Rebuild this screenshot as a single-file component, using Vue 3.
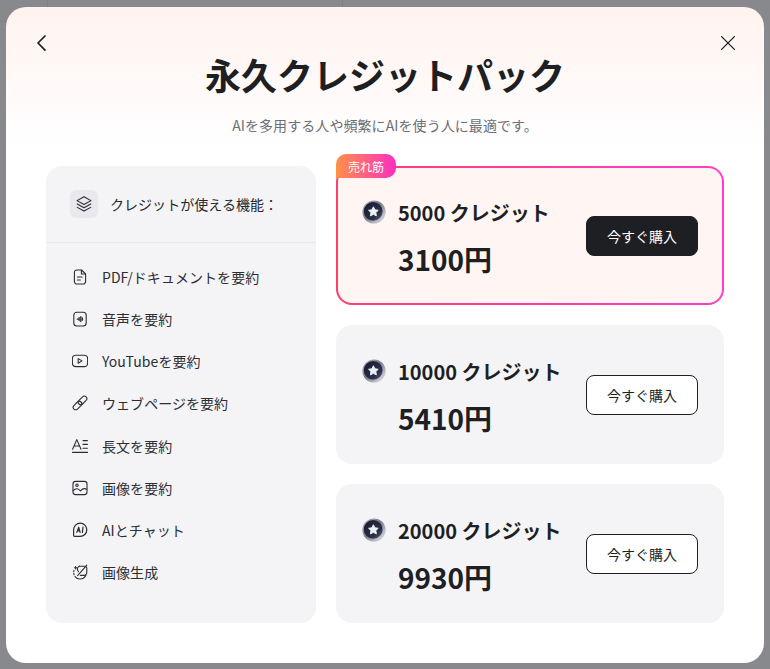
<script setup>
const features = [
  { label: 'PDF/ドキュメントを要約', icon: 'doc' },
  { label: '音声を要約', icon: 'audio' },
  { label: 'YouTubeを要約', icon: 'video' },
  { label: 'ウェブページを要約', icon: 'link' },
  { label: '長文を要約', icon: 'text' },
  { label: '画像を要約', icon: 'image' },
  { label: 'AIとチャット', icon: 'chat' },
  { label: '画像生成', icon: 'gen' },
]
const packs = [
  { credits: '5000 クレジット', price: '3100円', best: true },
  { credits: '10000 クレジット', price: '5410円', best: false },
  { credits: '20000 クレジット', price: '9930円', best: false },
]
</script>

<template>
  <div class="backdrop">
    <div class="modal">
      <div class="top-bar">
        <svg class="nav-icon" viewBox="0 0 20 20" fill="none" stroke="#1d1f23" stroke-width="1.7" stroke-linecap="round" stroke-linejoin="round"><path d="M13 3 6 10l7 7.2" /></svg>
        <svg class="nav-icon" viewBox="0 0 20 20" fill="none" stroke="#1d1f23" stroke-width="1.3" stroke-linecap="round"><path d="M3.6 3.6l12.8 12.8M16.4 3.6 3.6 16.4" /></svg>
      </div>
      <h1 class="title">永久クレジットパック</h1>
      <p class="subtitle">AIを多用する人や頻繁にAIを使う人に最適です。</p>
      <div class="content">
        <aside class="panel">
          <div class="panel-head">
            <span class="stack-box">
              <svg width="18" height="18" viewBox="0 0 16 16" fill="none" stroke="#2a2d32" stroke-width="1" stroke-linejoin="round" stroke-linecap="round">
                <path d="M8 1.6 14.2 5 8 8.4 1.8 5z" />
                <path d="M2 8l6 3.3L14 8" />
                <path d="M2 11l6 3.3 6-3.3" />
              </svg>
            </span>
            <span class="panel-title">クレジットが使える機能：</span>
          </div>
          <ul class="features">
            <li v-for="f in features" :key="f.label" class="feature">
              <svg class="f-icon" viewBox="0 0 16 16" fill="none" stroke="#2a2d32" stroke-width="1.1" stroke-linecap="round" stroke-linejoin="round">
                <template v-if="f.icon === 'doc'">
                  <path d="M2.4 3.4A2.4 2.4 0 0 1 4.8 1h4.8l4 4v7.6a2.4 2.4 0 0 1-2.4 2.4H4.8a2.4 2.4 0 0 1-2.4-2.4z" />
                  <path d="M9.4 1.2v3.8h4M5.4 8h4.8M5.4 11h3" />
                </template>
                <template v-else-if="f.icon === 'audio'">
                  <rect x="1.8" y="1.2" width="12.4" height="13.8" rx="3" />
                  <path d="M5.2 8.1h1M7.2 6.6v3M8.8 5.6v5M10.4 7v2.2" stroke-width="1.3" />
                </template>
                <template v-else-if="f.icon === 'video'">
                  <rect x="0.4" y="2.2" width="15.2" height="11.4" rx="3.4" />
                  <path d="M6.2 5.6v4.6l3.8-2.3z" />
                </template>
                <template v-else-if="f.icon === 'link'">
                  <g transform="rotate(-45 8 8)">
                    <rect x="-0.6" y="5.5" width="10" height="5" rx="2.5" />
                    <rect x="6.6" y="5.5" width="10" height="5" rx="2.5" />
                  </g>
                </template>
                <template v-else-if="f.icon === 'text'">
                  <path d="M0.6 11.2 4.8 1.6 9 11.2M2.1 8h5.4M11 2.6h4.4M11 6.4h4.4M11 10.2h4.4M0.4 14.4h15.2" />
                </template>
                <template v-else-if="f.icon === 'image'">
                  <rect x="1" y="1.4" width="14" height="13.2" rx="2.6" />
                  <circle cx="5" cy="5.2" r="1.2" />
                  <path d="M1.2 10.6c2.8-2.8 5.2-2 7.2.2 1.7-1.8 4-3 6.4-1.4" />
                </template>
                <template v-else-if="f.icon === 'chat'">
                  <path d="M8.2 1.2a6.6 6.6 0 1 1 0 13.2H2.6a1 1 0 0 1-1-1V7.8a6.6 6.6 0 0 1 6.6-6.6z" stroke-width="1.2" />
                  <path d="M4.8 10.4 6.7 5.2l1.4 5.2M5.5 8.8h2.4M11 5l-.6 5.4" stroke-width="1.2" />
                </template>
                <template v-else>
                  <path d="M2 6.4A6.4 6.4 0 0 0 2.8 12" stroke-dasharray="1.4 1.6" />
                  <path d="M3 12.6A6.4 6.4 0 0 0 8 15a6.6 6.6 0 0 0 6-4" />
                  <path d="M3.6 2.6v2.4M2.4 3.8h2.4" />
                  <path d="M7.2 2.2h5.6a2 2 0 0 1 2 2v4.2a3 3 0 0 1-3 3H8.4" />
                  <path d="M7.2 2.2a3.4 3.4 0 0 0-.8 5.4M14.8 1.2 5.6 11.6" />
                </template>
              </svg>
              <span>{{ f.label }}</span>
            </li>
          </ul>
        </aside>
        <div class="packs">
          <div v-for="p in packs" :key="p.credits" class="pack" :class="{ best: p.best }">
            <span v-if="p.best" class="badge">売れ筋</span>
            <div class="pack-info">
              <div class="pack-credit">
                <svg class="coin" viewBox="0 0 24 24">
                  <defs>
                    <linearGradient id="rim" x1="0" y1="0" x2="1" y2="1">
                      <stop offset="0" stop-color="#b9bbc6" />
                      <stop offset="0.45" stop-color="#767987" />
                      <stop offset="1" stop-color="#f2f2f6" />
                    </linearGradient>
                    <linearGradient id="face" x1="0" y1="0" x2="1" y2="1">
                      <stop offset="0" stop-color="#171a2e" />
                      <stop offset="0.7" stop-color="#2c2f48" />
                      <stop offset="1" stop-color="#6b6e86" />
                    </linearGradient>
                  </defs>
                  <circle cx="12" cy="12" r="11.6" fill="url(#rim)" />
                  <circle cx="11.2" cy="11.4" r="9.4" fill="url(#face)" />
                  <path d="M11.4 6.8l1.5 3 3.3.5-2.4 2.3.6 3.3-3-1.6-3 1.6.6-3.3-2.4-2.3 3.3-.5z" fill="#eef0f6" stroke="#eef0f6" stroke-linejoin="round" />
                </svg>
                <span class="credits">{{ p.credits }}</span>
              </div>
              <div class="price">{{ p.price }}</div>
            </div>
            <button class="buy" :class="{ dark: p.best }" type="button">今すぐ購入</button>
          </div>
        </div>
      </div>
    </div>
  </div>
</template>

<style>
html, body { margin: 0; background: #88898d; }
</style>

<style scoped>
* { box-sizing: border-box; }
.backdrop {
  width: 770px;
  height: 669px;
  padding: 7px 6px 6px;
  overflow: hidden;
  font-family: "Noto Sans CJK JP", "Noto Sans", sans-serif;
  color: #1d1f23;
  background-color: #88898d;
  background-image:
    linear-gradient(#808185, #808185),
    linear-gradient(#808185, #808185),
    linear-gradient(#808185, #808185);
  background-size: 1px 7px, 1px 7px, 6px 1px;
  background-position: 47px 0, 342px 0, 0 21px;
  background-repeat: no-repeat;
}
.modal {
  height: 656px;
  border-radius: 20px;
  padding: 26px 40px 40px;
  background: linear-gradient(180deg, #fff3ee 0, #fffafa 90px, #fff 140px);
}
.top-bar {
  display: flex;
  justify-content: space-between;
  margin: 0 -14px;
  height: 20px;
}
.nav-icon { width: 20px; height: 20px; display: block; }
.title {
  margin: -5px 0 0;
  text-align: center;
  font-size: 36px;
  line-height: 52px;
  font-weight: 700;
}
.subtitle {
  margin: 15px 0 0;
  text-align: center;
  font-size: 14px;
  line-height: 20px;
  letter-spacing: 0.08px;
  color: #6b6f78;
}
.content {
  display: flex;
  gap: 20px;
  margin-top: 31px;
  height: 457px;
}
.panel {
  width: 270px;
  flex: none;
  background: #f4f4f7;
  border-radius: 16px;
}
.panel-head {
  display: flex;
  align-items: center;
  gap: 12px;
  height: 77px;
  padding: 0 24px;
  border-bottom: 1px solid #e9e9ed;
}
.stack-box {
  width: 28px;
  height: 28px;
  border-radius: 6px;
  background: #e8e8ed;
  display: flex;
  align-items: center;
  justify-content: center;
}
.panel-title { font-size: 14px; line-height: 20px; letter-spacing: 0.04px; color: #26282d; }
.features {
  list-style: none;
  margin: 0;
  padding: 12.7px 24px 0 26px;
}
.feature {
  display: flex;
  align-items: center;
  gap: 14px;
  height: 42.2px;
  font-size: 14px;
  letter-spacing: 0.05px;
  color: #2c2e33;
}
.f-icon { width: 16px; height: 16px; flex: none; }
.packs {
  flex: 1;
  display: flex;
  flex-direction: column;
  gap: 20px;
}
.pack {
  position: relative;
  height: 139px;
  flex: none;
  display: flex;
  align-items: center;
  justify-content: space-between;
  padding: 0 26px;
  background: #f4f4f7;
  border-radius: 16px;
}
.pack.best {
  padding: 0 24px;
  border: 2px solid transparent;
  background:
    linear-gradient(#fff5f3, #fff5f3) padding-box,
    linear-gradient(90deg, #ff3d71, #ff3dc8) border-box;
}
.badge {
  position: absolute;
  left: -2px;
  top: -14px;
  width: 60px;
  height: 24px;
  display: flex;
  align-items: center;
  justify-content: center;
  font-size: 12px;
  color: #fff;
  border-radius: 10px 10px 10px 0;
  background: linear-gradient(90deg, #ff9148, #ff2fc0);
}
.pack-info { padding-top: 5px; }
.pack-credit {
  display: flex;
  align-items: center;
  gap: 12px;
  height: 26px;
}
.coin { width: 24px; height: 24px; flex: none; margin-top: -2px; }
.credits { font-size: 20px; line-height: 26px; font-weight: 700; white-space: nowrap; }
.price {
  margin: 15px 0 0 36px;
  font-size: 28px;
  line-height: 36px;
  font-weight: 700;
}
.buy {
  width: 112px;
  height: 40px;
  border-radius: 8px;
  border: 1px solid #1d1f23;
  background: #fff;
  color: #1d1f23;
  font: inherit;
  font-size: 14px;
  padding: 0;
}
.buy.dark { background: #1d1f23; color: #fff; }
</style>
